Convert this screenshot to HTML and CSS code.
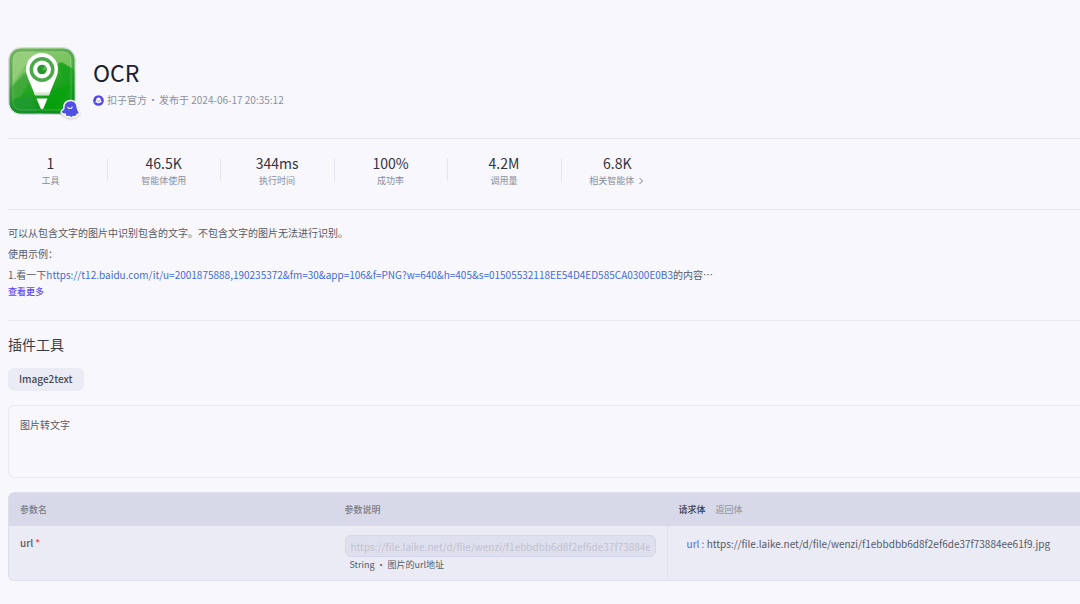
FILE: index.html
```html
<!DOCTYPE html>
<html lang="zh-CN">
<head>
<meta charset="utf-8">
<meta name="viewport" content="width=device-width, initial-scale=1">
<title>OCR</title>
<link rel="stylesheet" href="styles.css">
</head>
<body>
<main class="page">
  <header class="plugin-header">
    <div class="logo">
      <svg class="logo-image" viewBox="0 0 68 68" aria-hidden="true">
        <defs>
          <linearGradient id="green" x1="0" y1="0" x2="0.4" y2="1">
            <stop offset="0" stop-color="#78bd5e"/>
            <stop offset="0.45" stop-color="#38ad2e"/>
            <stop offset="1" stop-color="#079512"/>
          </linearGradient>
          <linearGradient id="edge" x1="0" y1="0" x2="0.3" y2="1">
            <stop offset="0" stop-color="#69ab58"/>
            <stop offset="1" stop-color="#128a25"/>
          </linearGradient>
          <clipPath id="tile"><rect x="1.500" y="1.500" width="65" height="65" rx="11"/></clipPath>
        </defs>
        <rect x="0.5" y="0.5" width="67" height="67" rx="12" fill="#fff" stroke="#d8dae4"/>
        <g clip-path="url(#tile)">
          <rect x="1" y="1" width="66" height="66" fill="url(#green)"/>
          <path d="M1 1h66v22L54 15 42 20 17 28 1 42z" fill="#8ccb70" opacity=".8"/>
          <path d="M5 5h30L18 17 5 35z" fill="#a9d58f" opacity=".5"/>
          <path d="M15 26 29 22 13 49 1 54V43z" fill="#49aa43" opacity=".7"/>
          <path d="M51 15 67 24v43H43l14-21z" fill="#16a51b" opacity=".7"/>
          <path d="M1 55 23 48 30 67H1z" fill="#23973a" opacity=".6"/>
          <path d="M38 45 62 38 51 67H34z" fill="#07a30c" opacity=".7"/>
          <rect x="3" y="3" width="62" height="62" rx="10" fill="none" stroke="url(#edge)" stroke-width="3" opacity=".7"/>
          <rect x="5" y="5" width="58" height="58" rx="8" fill="none" stroke="#c7e8b9" stroke-width="1" opacity=".25"/>
        </g>
        <path d="M34 6c-9 0-16 7-16 16 0 3 .6 5.500 1.600 8L27 48h14l7.400-18c1-2.500 1.600-5 1.600-8 0-9-7-16-16-16z" fill="#fff"/>
        <path d="M26 45.500h16l-1 3H27z" fill="#cfeac8"/>
        <path d="M28.500 51.500h11l-4.200 10q-1.300 1.500-2.600 0z" fill="#fff"/>
        <circle cx="34" cy="22.500" r="12.500" fill="#4aa848"/>
        <circle cx="34" cy="22.500" r="9" fill="#fff"/>
        <circle cx="34" cy="22.500" r="4.800" fill="#27992c"/>
        <path d="M34 22.500l3-3.700a4.800 4.800 0 0 1 1.500 5z" fill="#5bb35a"/>
      </svg>
      <svg class="logo-badge" viewBox="0 0 22 22" aria-hidden="true">
        <path class="badge-shape" d="M11.200 3.200c3.400-.4 5.900 1.900 6.200 5.100.2 1.500.3 2.600.8 3.800.6 1.200 1.600 2.100 1.300 3.200-.3.800-1.200.5-2 .3.100 1.400-.6 2.600-1.700 2.500-.8 0-1.200-.5-1.700-.4-.7.200-.9 1.200-1.900 1.200s-1.400-1-2.100-1.100c-.8-.1-1.300.6-2.200.2-1-.4-1.100-1.600-1.200-2.700-1.500.3-3.200.1-3.700-1-.4-1.200.8-1.900 1.900-2.600.9-.6.600-1.800.7-2.900.2-3 2.400-5.300 5.600-5.600z"/>
        <path d="M8.800 9.400q2.300 2.400 4.400-.3" fill="none" stroke="#fff" stroke-width="1.100" stroke-linecap="round"/>
      </svg>
    </div>
    <div class="heading">
      <h1>OCR</h1>
      <div class="meta">
        <svg class="author-icon" viewBox="0 0 12 12" aria-hidden="true">
          <circle cx="6" cy="6" r="5.800" fill="#5147ec"/>
          <path d="M6 2.700a2.500 2.500 0 0 1 2.500 2.500v.7c.8.600 1 1.300.8 1.900-.4.500-.9.200-1.200.1C7.700 9 7.200 8.800 6 9S4.300 9 3.900 7.900c-.3.100-.8.400-1.200-.1-.2-.6 0-1.300.8-1.900v-.7A2.500 2.500 0 0 1 6 2.700z" fill="#fff"/>
          <path d="M4.700 6.300q1.300 1.200 2.600 0" fill="none" stroke="#5147ec" stroke-width=".8"/>
        </svg>
        <span>扣子官方</span><span class="dot">·</span><span>发布于 2024-06-17 20:35:12</span>
      </div>
    </div>
  </header>

  <section class="stats">
    <div class="stat-list">
      <div class="stat"><strong>1</strong><span>工具</span></div>
      <div class="stat"><strong>46.5K</strong><span>智能体使用</span></div>
      <div class="stat"><strong>344ms</strong><span>执行时间</span></div>
      <div class="stat"><strong>100%</strong><span>成功率</span></div>
      <div class="stat"><strong>4.2M</strong><span>调用量</span></div>
      <div class="stat"><strong>6.8K</strong><a class="related" href="#related">相关智能体
        <svg class="chevron" viewBox="0 0 8 8" aria-hidden="true"><path d="M2.500 1 5.500 4 2.500 7"/></svg></a></div>
    </div>
  </section>

  <section class="description">
    <p>可以从包含文字的图片中识别包含的文字。不包含文字的图片无法进行识别。</p>
    <p>使用示例：</p>
    <p>1.看一下<a href="#sample">https://t12.baidu.com/it/u=2001875888,190235372&amp;fm=30&amp;app=106&amp;f=PNG?w=640&amp;h=405&amp;s=01505532118EE54D4ED585CA0300E0B3</a>的内容⋯</p>
    <button class="more" type="button">查看更多</button>
  </section>

  <section class="tools">
    <h2>插件工具</h2>
    <button class="tool-tab" type="button">Image2text</button>
    <div class="tool-summary">图片转文字</div>
    <table class="params">
      <thead>
        <tr>
          <th class="col-name" scope="col">参数名</th>
          <th class="col-desc" scope="col">参数说明</th>
          <th class="col-body" scope="col">
            <div class="body-tabs">
              <button class="body-tab active" type="button">请求体</button>
              <button class="body-tab" type="button">返回体</button>
            </div>
          </th>
        </tr>
      </thead>
      <tbody>
        <tr>
          <td class="name"><label for="url">url<span class="required">*</span></label></td>
          <td class="desc">
            <input id="url" type="text" placeholder="https://file.laike.net/d/file/wenzi/f1ebbdbb6d8f2ef6de37f73884ee61f9.jpg" disabled>
            <div class="hint">String · 图片的url地址</div>
          </td>
          <td class="request"><span class="key">url :</span> https://file.laike.net/d/file/wenzi/f1ebbdbb6d8f2ef6de37f73884ee61f9.jpg</td>
        </tr>
      </tbody>
    </table>
  </section>
</main>
</body>
</html>
```

FILE: styles.css
```css
* {
  box-sizing: border-box;
}

body {
  margin: 0;
  background: #f8f7fc;
  color: #555a66;
  font-family: "Noto Sans CJK SC", sans-serif;
  font-size: 10px;
  line-height: 16px;
}

h1,
h2,
p {
  margin: 0;
}

button {
  border: 0;
  padding: 0;
  background: none;
  color: inherit;
  font: inherit;
  cursor: pointer;
}

a {
  color: #416bdb;
  text-decoration: none;
}

.page {
  padding: 47px 0 24px 8px;
}

.plugin-header {
  display: flex;
  gap: 17px;
  padding-bottom: 23px;
}

.logo {
  position: relative;
  width: 68px;
  height: 68px;
}

.logo-image {
  display: block;
  width: 100%;
}

.logo-badge {
  position: absolute;
  right: -5px;
  bottom: -5px;
  width: 22px;
  height: 22px;
  overflow: visible;
  filter: drop-shadow(0 1px 1px #0003);
}

.badge-shape {
  fill: #5050e6;
  stroke: #fff;
  stroke-width: 3px;
  stroke-linejoin: round;
  paint-order: stroke;
}

.heading {
  padding-top: 8px;
}

h1 {
  color: #1b2131;
  font-size: 23px;
  font-weight: 400;
  line-height: 34px;
}

.meta {
  display: flex;
  align-items: center;
  gap: 3px;
  padding-top: 3px;
  color: #8d919c;
}

.author-icon {
  width: 11px;
  height: 11px;
}

.dot {
  width: 6px;
  line-height: 16px;
  display: flex;
  justify-content: center;
}

.stats {
  border-top: 1px solid #e8e7ef;
  border-bottom: 1px solid #e8e7ef;
  padding: 15px 0 20px;
}

.stat-list {
  display: grid;
  grid-template-columns: 99px repeat(5, 1fr);
  max-width: 666px;
}

.stat {
  position: relative;
  display: flex;
  flex-direction: column;
  align-items: center;
  color: #8a8e99;
  font-size: 9px;
}

.stat:first-child {
  padding-right: 14px;
}

.stat + .stat::before {
  content: "";
  position: absolute;
  top: 4px;
  left: 0;
  width: 1px;
  height: 23px;
  background: #e5e5ed;
}

.stat strong {
  color: #303541;
  font-size: 14px;
  font-weight: 400;
  line-height: 18px;
}

.stat strong + * {
  padding-top: 1px;
}

.related {
  display: flex;
  align-items: center;
  gap: 3px;
  color: inherit;
}

.chevron {
  width: 8px;
  height: 8px;
  fill: none;
  stroke: #777b87;
}

.description {
  border-bottom: 1px solid #ebeaf0;
  padding: 12px 0 21px;
  line-height: 21px;
}

.more {
  display: block;
  color: #624aff;
  font-size: 9px;
  font-weight: 500;
  line-height: 14px;
}

.tools {
  padding-top: 13px;
}

h2 {
  color: #383c47;
  font-size: 14px;
  font-weight: 400;
  line-height: 20px;
}

.tool-tab {
  margin-top: 14px;
  border-radius: 6px;
  padding: 3px 11px 4px;
  background: #ebebf5;
  color: #444955;
  font-weight: 500;
}

.tool-summary {
  min-height: 73px;
  margin: 14px 0;
  border: 1px solid #e9e8f0;
  border-right: 0;
  border-radius: 6px 0 0 6px;
  padding: 11px;
}

.params {
  width: 100%;
  table-layout: fixed;
  border: 1px solid #dddeec;
  border-right: 0;
  border-radius: 6px 0 0 6px;
  border-spacing: 0;
  background: #ebebf5;
  overflow: hidden;
}

.params th {
  height: 33px;
  padding: 0 11px;
  background: #d8d9e8;
  color: #777b8a;
  font-size: 9px;
  font-weight: 500;
  text-align: left;
}

.params .col-name {
  width: 30.3%;
}

.params .col-desc {
  width: 31.1%;
}

.params td {
  padding: 9px 11px 7px;
  vertical-align: top;
}

.params .col-name,
.params .name {
  padding-right: 0;
}

.name label {
  font-weight: 500;
}

.required {
  margin-left: 2px;
  color: #f04050;
}

.params .desc input {
  display: block;
  width: 100%;
  height: 22px;
  border: 1px solid #d3d6e8;
  border-radius: 6px;
  padding: 0 5px;
  background: #dfe0ed;
  font: inherit;
}

.desc input::placeholder {
  color: #bfc0cf;
}

.hint {
  padding-left: 5px;
  font-size: 9px;
}

.params .request {
  border-left: 1px solid #dfdfec;
  padding-top: 10px;
  padding-left: 19px;
}

.key {
  color: #5a5df0;
}

.body-tabs {
  display: flex;
  gap: 10px;
  padding-left: 1px;
}

.body-tab {
  color: #9a9caa;
}

.body-tab.active {
  color: #353a48;
  font-weight: 500;
}
```
